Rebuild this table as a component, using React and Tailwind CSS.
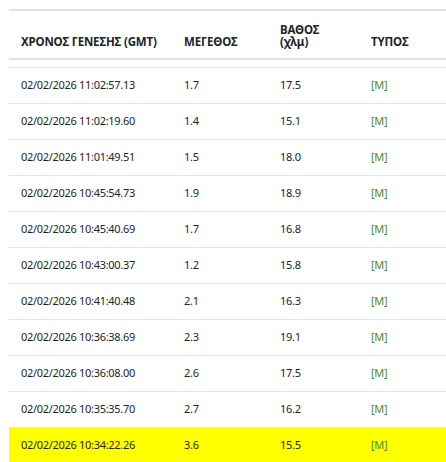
import React from "react";

const rows = [
  { time: "02/02/2026 11:02:57.13", mag: "1.7", depth: "17.5", type: "[M]" },
  { time: "02/02/2026 11:02:19.60", mag: "1.4", depth: "15.1", type: "[M]" },
  { time: "02/02/2026 11:01:49.51", mag: "1.5", depth: "18.0", type: "[M]" },
  { time: "02/02/2026 10:45:54.73", mag: "1.9", depth: "18.9", type: "[M]" },
  { time: "02/02/2026 10:45:40.69", mag: "1.7", depth: "16.8", type: "[M]" },
  { time: "02/02/2026 10:43:00.37", mag: "1.2", depth: "15.8", type: "[M]" },
  { time: "02/02/2026 10:41:40.48", mag: "2.1", depth: "16.3", type: "[M]" },
  { time: "02/02/2026 10:36:38.69", mag: "2.3", depth: "19.1", type: "[M]" },
  { time: "02/02/2026 10:36:08.00", mag: "2.6", depth: "17.5", type: "[M]" },
  { time: "02/02/2026 10:35:35.70", mag: "2.7", depth: "16.2", type: "[M]" },
  { time: "02/02/2026 10:34:22.26", mag: "3.6", depth: "15.5", type: "[M]", highlight: true },
];

export default function App() {
  return (
    <div
      className="w-[446px] h-[462px] overflow-hidden bg-white pl-[9px] pt-[9px] text-[#212529]"
      style={{ fontFamily: '"Noto Sans", "Open Sans", sans-serif' }}
    >
      <table className="w-[437px] table-fixed border-collapse">
        <colgroup>
          <col className="w-[175px]" />
          <col className="w-[96px]" />
          <col className="w-[91px]" />
          <col className="w-[75px]" />
        </colgroup>
        {/* Header */}
        <thead className="text-[11.5px] tracking-[-0.15px]">
          <tr className="h-[49px] border-t-2 border-b-2 border-[#dee2e6]">
            <th className="pl-3 pb-[10px] align-bottom text-left font-bold leading-[12px]">
              ΧΡΟΝΟΣ ΓΕΝΕΣΗΣ (GMT)
            </th>
            <th className="pb-[10px] align-bottom text-left font-bold leading-[12px]">ΜΕΓΕΘΟΣ</th>
            <th className="pb-[10px] align-bottom text-left font-bold leading-[12px]">
              ΒΑΘΟΣ
              <br />
              (χλμ)
            </th>
            <th className="pb-[10px] align-bottom text-left font-bold leading-[12px]">ΤΥΠΟΣ</th>
          </tr>
        </thead>
        <tbody className="text-[11px] tracking-[-0.3px]">
          <tr className="h-[8px] border-b border-[#e5e5e5]">
            <td colSpan={4}></td>
          </tr>
          {rows.map((r) => (
            <tr
              key={r.time}
              className={`h-[36px] border-b border-[#e5e5e5] ${r.highlight ? "bg-[#ffff00]" : ""}`}
            >
              <td className="pl-3 align-middle">{r.time}</td>
              <td className="align-middle">{r.mag}</td>
              <td className="align-middle">{r.depth}</td>
              <td className="align-middle text-[#4a8a2e]">{r.type}</td>
            </tr>
          ))}
        </tbody>
      </table>
    </div>
  );
}
